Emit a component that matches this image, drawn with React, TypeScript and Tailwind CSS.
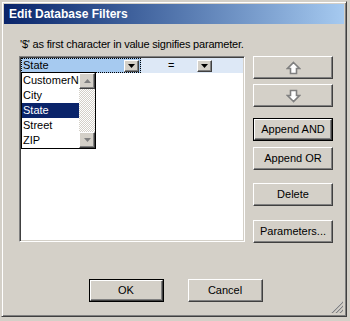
import React from 'react';

const raised =
  'bg-[#d4d0c8] border border-t-white border-l-white border-r-[#404040] border-b-[#404040] shadow-[inset_-1px_-1px_0_#808080]';

function Btn({ children, def, className = '' }: { children: React.ReactNode; def?: boolean; className?: string }) {
  if (def) {
    return (
      <div className={`border border-black ${className}`}>
        <div className={`${raised} h-full w-full flex items-center justify-center`}>{children}</div>
      </div>
    );
  }
  return <div className={`${raised} flex items-center justify-center ${className}`}>{children}</div>;
}

function DropTri({ color = '#000' }: { color?: string }) {
  return (
    <svg width="7" height="4" viewBox="0 0 7 4">
      <path d="M0 0h7L3.5 4z" fill={color} />
    </svg>
  );
}

function ArrowIcon({ down }: { down?: boolean }) {
  return (
    <svg width="15" height="14" viewBox="0 0 15 14" className={down ? 'rotate-180' : ''}>
      <path d="M7.5 1.5 13.5 7.5H10.5V12.5H4.5V7.5H1.5Z" fill="#fff" stroke="#808080" strokeWidth="1.6" strokeLinejoin="miter" />
    </svg>
  );
}

export default function App() {
  const items = ['CustomerNr', 'City', 'State', 'Street', 'ZIP'];
  return (
    <div className="w-[350px] h-[321px] bg-[#d4d0c8] pt-[1px] pl-[1px] pr-[3px] pb-[4px] font-['Liberation_Sans',Arial,sans-serif] text-[11px] text-black leading-[13px]">
      <div className="relative h-full flex flex-col border border-t-[#d4d0c8] border-l-[#d4d0c8] border-r-[#404040] border-b-[#404040] shadow-[inset_1px_1px_0_#fff,inset_-1px_-1px_0_#808080] p-[2px]">
        {/* title */}
        <div className="h-[20px] flex items-center pl-[5px] bg-linear-to-r from-[#0a246a] to-[#a6caf0] text-white font-bold text-[12px]">
          Edit Database Filters
        </div>

        <div className="flex-1 flex flex-col pl-[15px] pr-[10px] pt-[14px]">
          <div className="ml-[1px] h-[13px] tracking-[-0.2px]">'$' as first character in value signifies parameter.</div>

          <div className="mt-[5px] flex gap-[8px]">
            {/* filter list */}
            <div className="relative w-[226px] h-[186px] bg-white border border-t-[#808080] border-l-[#808080] border-r-white border-b-white shadow-[inset_1px_1px_0_#404040,inset_-1px_-1px_0_#d4d0c8] p-[1px]">
              <div className="h-[15px] bg-[#dde8f6] flex items-center">
                <div className="w-[120px] h-full bg-[#a6caf0] border border-dotted border-black flex items-center justify-between pr-[1px]">
                  <span className="pl-[1px]">State</span>
                  <Btn className="w-[15px] h-[12px]">
                    <DropTri />
                  </Btn>
                </div>
                <span className="ml-[27px]">=</span>
                <Btn className="ml-[23px] w-[15px] h-[12px]">
                  <DropTri />
                </Btn>
              </div>

              {/* opened drop-down */}
              <div className="absolute left-[1px] top-[15px] w-[75px] h-[77px] bg-white border border-black flex">
                <div className="flex-1 flex flex-col overflow-hidden">
                  {items.map((it) => (
                    <div
                      key={it}
                      className={`h-[15px] flex items-center pl-[1px] whitespace-nowrap ${it === 'State' ? 'bg-[#0a246a] text-white' : ''}`}
                    >
                      {it}
                    </div>
                  ))}
                </div>
                <div className="w-[16px] flex flex-col bg-[image:repeating-conic-gradient(#d4d0c8_0_25%,#ffffff_0_50%)] bg-[length:2px_2px]">
                  <Btn className="w-[16px] h-[16px]">
                    <svg width="7" height="4" viewBox="0 0 7 4" className="rotate-180">
                      <path d="M0 0h7L3.5 4z" fill="#808080" />
                    </svg>
                  </Btn>
                  <div className="flex-1" />
                  <Btn className="w-[16px] h-[16px]">
                    <DropTri color="#808080" />
                  </Btn>
                </div>
              </div>
            </div>

            {/* buttons */}
            <div className="w-[80px] flex flex-col">
              <Btn className="h-[23px]">
                <ArrowIcon />
              </Btn>
              <Btn className="mt-[5px] h-[23px]">
                <ArrowIcon down />
              </Btn>
              <Btn def className="mt-[11px] h-[23px]">Append AND</Btn>
              <Btn className="mt-[6px] h-[23px]">Append OR</Btn>
              <Btn className="mt-[13px] h-[23px]">Delete</Btn>
              <Btn className="mt-[14px] h-[23px]">Parameters...</Btn>
            </div>
          </div>

          <div className="mt-[36px] flex justify-center gap-[24px] pr-[2px]">
            <Btn def className="w-[75px] h-[23px]">OK</Btn>
            <Btn className="w-[75px] h-[23px]">Cancel</Btn>
          </div>
        </div>

        {/* size grip */}
        <svg width="12" height="12" viewBox="0 0 12 12" className="absolute right-[3px] bottom-[3px]">
          <path d="M11 1 1 11M11 5 5 11M11 9 9 11" stroke="#fff" strokeWidth="1" />
          <path d="M12 1 1 12M12 5 5 12M12 9 9 12" stroke="#808080" strokeWidth="1.2" />
        </svg>
      </div>
    </div>
  );
}
